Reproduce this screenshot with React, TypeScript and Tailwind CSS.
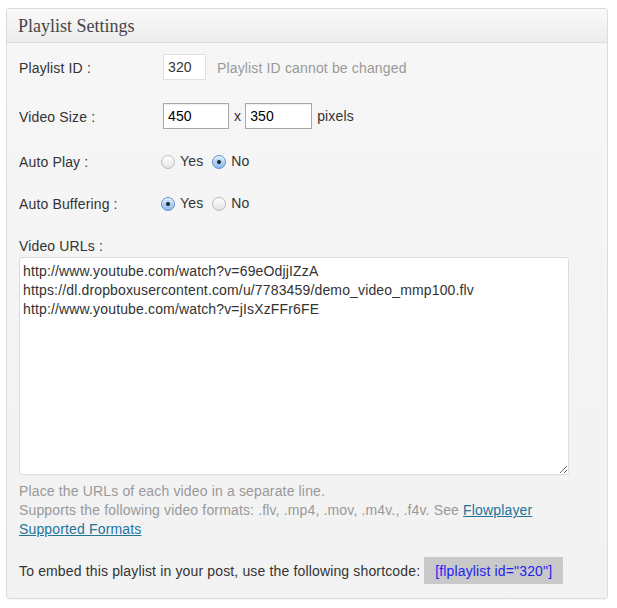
const urls = [
  'http://www.youtube.com/watch?v=69eOdjjIZzA',
  'https://dl.dropboxusercontent.com/u/7783459/demo_video_mmp100.flv',
  'http://www.youtube.com/watch?v=jIsXzFFr6FE',
].join('\n');

function Radio({ checked, label }: { checked: boolean; label: string }) {
  return (
    <label className="flex items-center">
      {checked ? (
        <span className="w-[14px] h-[14px] rounded-full border border-[#5b8dc4] bg-gradient-to-b from-[#d7e8fb] to-[#8dbbee] shadow-[inset_0_1px_1px_rgba(255,255,255,0.8)] flex items-center justify-center">
          <span className="w-[4px] h-[4px] rounded-full bg-[#1c2530]" />
        </span>
      ) : (
        <span className="w-[14px] h-[14px] rounded-full border border-[#b9b9b9] bg-gradient-to-b from-white to-[#e4e4e4]" />
      )}
      <span className="ml-[5px]">{label}</span>
    </label>
  );
}

function Row({ label, children, className }: { label: string; children: React.ReactNode; className?: string }) {
  return (
    <div className={`flex items-center h-[26px] ${className ?? ''}`}>
      <div className="w-[144px] pt-[2px]">{label}</div>
      {children}
    </div>
  );
}

export default function App() {
  return (
    <div className="min-h-screen bg-white pt-[8px] pl-[6px] font-['Liberation_Sans',Arial,sans-serif] text-[14px] tracking-[0.15px] text-[#333]">
      <div className="w-[602px] h-[591px] border border-[#dcdcdc] rounded-[3px] overflow-hidden flex flex-col shadow-[0_1px_1px_rgba(0,0,0,0.04)]">
        <div className="h-[34px] shrink-0 border-b border-[#dcdcdc] bg-gradient-to-b from-[#f9f9f9] to-[#ececec] flex items-center pl-[11px]">
          <h3 className="font-['Liberation_Serif',Georgia,serif] text-[18px] tracking-normal text-[#464646] pt-[1px]">Playlist Settings</h3>
        </div>

        <div className="flex-1 bg-gradient-to-b from-[#f6f6f6] to-[#f2f2f2] pl-[12px] pt-[11px]">
          <Row label="Playlist ID :">
            <div className="w-[43px] h-[26px] border border-[#e0e0e0] bg-white px-[4px] flex items-center">320</div>
            <span className="ml-[11px] text-[#999] pt-[2px]">Playlist ID cannot be changed</span>
          </Row>

          <Row label="Video Size :" className="mt-[23px]">
            <input
              readOnly
              value="450"
              className="w-[66px] h-[26px] border border-[#a9a9a9] bg-white px-[4px] text-black outline-none shadow-[inset_0_1px_1px_rgba(0,0,0,0.07)]"
            />
            <span className="ml-[5px] mr-[4px] pt-[1px]">x</span>
            <input
              readOnly
              value="350"
              className="w-[67px] h-[26px] border border-[#a9a9a9] bg-white px-[4px] text-black outline-none shadow-[inset_0_1px_1px_rgba(0,0,0,0.07)]"
            />
            <span className="ml-[5px] pt-[1px]">pixels</span>
          </Row>

          <Row label="Auto Play :" className="mt-[19px]">
            <div className="flex items-center gap-[9px] -ml-[2px] pt-[1px]">
              <Radio checked={false} label="Yes" />
              <Radio checked label="No" />
            </div>
          </Row>

          <Row label="Auto Buffering :" className="mt-[16px]">
            <div className="flex items-center gap-[9px] -ml-[2px] pt-[1px]">
              <Radio checked label="Yes" />
              <Radio checked={false} label="No" />
            </div>
          </Row>

          <div className="mt-[22px] leading-[16px]">Video URLs :</div>
          <textarea
            readOnly
            defaultValue={urls}
            className="mt-[3px] block w-[550px] h-[218px] border border-[#dcdcdc] rounded-[3px] bg-white px-[3px] pt-[4px] pb-[6px] leading-[19px] text-[#333] outline-none resize"
          />

          <div className="mt-[7px] leading-[19px] text-[#999]">
            <p>Place the URLs of each video in a separate line.</p>
            <p>
              Supports the following video formats: .flv, .mp4, .mov, .m4v., .f4v. See{' '}
              <a href="#" className="text-[#21759b] underline">
                Flowplayer
                <br />
                Supported Formats
              </a>
            </p>
          </div>

          <div className="mt-[18px] flex items-center">
            <span className="pt-[1px]">To embed this playlist in your post, use the following shortcode:</span>
            <span className="ml-[4px] h-[27px] px-[11px] bg-[#c9c9c9] text-[#1f1ff0] flex items-center pt-[1px]">
              [flplaylist id="320"]
            </span>
          </div>
        </div>
      </div>
    </div>
  );
}
